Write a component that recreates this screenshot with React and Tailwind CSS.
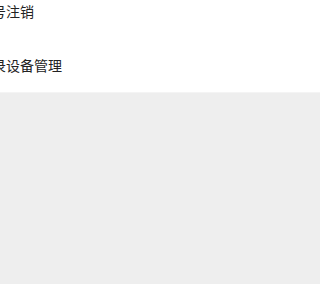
export default function App() {
  const rows = ['账号注销', '登录设备管理'];
  return (
    <div className="min-h-screen w-full bg-[#eeeeee] font-['Noto_Sans_CJK_SC',sans-serif]">
      <div className="-mt-[16px] bg-white border-b border-[#f4f4f4]">
        {rows.map((label) => (
          <div key={label} className="h-[54px] flex items-center -ml-[22px] text-[14px] text-[#222222]">
            {label}
          </div>
        ))}
      </div>
    </div>
  );
}
